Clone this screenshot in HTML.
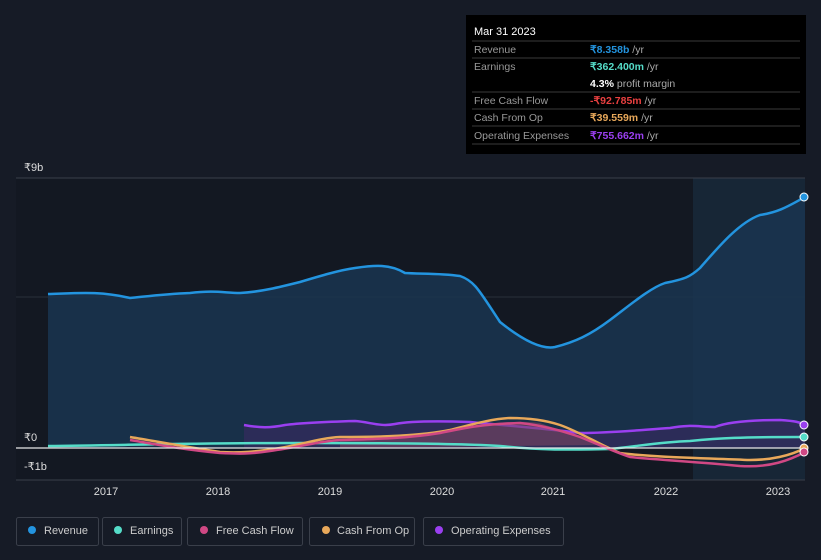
<!DOCTYPE html>
<html><head><style>
body{margin:0;background:#161b26;font-family:"Liberation Sans",sans-serif;}
svg{display:block}
</style></head><body>
<svg width="821" height="560" xmlns="http://www.w3.org/2000/svg" font-family="Liberation Sans, sans-serif">
<rect width="821" height="560" fill="#161b26"/>
<rect x="16" y="178" width="789" height="302" fill="#131822"/>
<rect x="693" y="178" width="112" height="302" fill="#172636"/>
<line x1="16" y1="178" x2="805" y2="178" stroke="#3a3f4a"/>
<line x1="16" y1="297" x2="805" y2="297" stroke="#2a2f3a"/>
<line x1="16" y1="480" x2="805" y2="480" stroke="#3a3f4a"/>
<text x="24" y="171" font-size="11" fill="#ddd">₹9b</text>
<text x="24" y="441" font-size="11" fill="#ddd">₹0</text>
<text x="24" y="470" font-size="11" fill="#ddd">-₹1b</text>
<path d="M48,294 C80,293 100,291 130,298 C150,296 165,294 190,293 C215,290 225,293 240,293 C260,292 280,287 300,282 C320,276 340,270 355,268 C375,265 390,264 405,273 C420,274 440,273 460,276 C475,281 480,292 500,322 C520,338 540,350 555,347 C575,342 590,335 610,320 C630,305 650,288 665,283 C685,279 690,277 700,268 C720,245 740,222 760,215 C780,212 790,205 805,197 L805,448 L48,448 Z" fill="#1a3550" opacity="0.85"/>
<path d="M48,294 C80,293 100,291 130,298 C150,296 165,294 190,293 C215,290 225,293 240,293 C260,292 280,287 300,282 C320,276 340,270 355,268 C375,265 390,264 405,273 C420,274 440,273 460,276 C475,281 480,292 500,322 C520,338 540,350 555,347 C575,342 590,335 610,320 C630,305 650,288 665,283 C685,279 690,277 700,268 C720,245 740,222 760,215 C780,212 790,205 805,197" fill="none" stroke="#2394df" stroke-width="2.5"/>
<path d="M244,425 C260,428 270,428 285,425 C300,423 320,422 355,421 C370,422 380,427 395,424 C410,421 440,421 470,422 C500,425 540,428 580,433 C610,433 640,430 670,428 C690,424 700,427 715,427 C730,421 760,420 780,420 C795,421 800,422 805,425 L805,448 L244,448 Z" fill="#3b2a63" opacity="0.6"/>
<path d="M244,425 C260,428 270,428 285,425 C300,423 320,422 355,421 C370,422 380,427 395,424 C410,421 440,421 470,422 C500,425 540,428 580,433 C610,433 640,430 670,428 C690,424 700,427 715,427 C730,421 760,420 780,420 C795,421 800,422 805,425" fill="none" stroke="#9a3ff0" stroke-width="2.5"/>
<path d="M340,440 C380,437 420,438 450,430 C480,423 520,420 540,423 C560,430 580,438 600,445 L340,448Z" fill="#7a4660" opacity="0.6"/>
<path d="M48,446 C130,445 200,443 300,443 C400,443 470,444 500,446 C540,450 560,450 610,449 C640,446 660,442 690,441 C720,438 740,437 805,437" fill="none" stroke="#55dcc8" stroke-width="2.5"/>
<path d="M130,437 C160,442 180,446 220,452 C240,453 255,452 280,448 C300,445 320,438 340,437 C380,437 420,436 450,430 C470,425 490,419 510,418 C530,418 545,420 560,425 C580,432 600,445 620,453 C650,457 700,458 750,460 C770,460 790,456 805,448" fill="none" stroke="#e8a85a" stroke-width="2.5"/>
<path d="M130,440 C160,445 180,449 220,453 C240,454 250,454 270,451 C300,447 320,441 340,440 C380,439 410,438 440,433 C460,429 480,424 520,423 C540,425 560,430 580,437 C600,445 615,452 630,457 C660,460 700,462 740,466 C770,468 790,460 805,452" fill="none" stroke="#d04884" stroke-width="2.5"/>
<line x1="16" y1="448" x2="805" y2="448" stroke="#e8e8e8" stroke-width="1.2"/>
<circle cx="804" cy="197" r="4" fill="#2394df" stroke="#fff" stroke-width="1"/>
<circle cx="804" cy="425" r="4" fill="#9a3ff0" stroke="#fff" stroke-width="1"/>
<circle cx="804" cy="437" r="4" fill="#55dcc8" stroke="#fff" stroke-width="1"/>
<circle cx="804" cy="448" r="4" fill="#e8a85a" stroke="#fff" stroke-width="1"/>
<circle cx="804" cy="452" r="4" fill="#d04884" stroke="#fff" stroke-width="1"/>
<g font-size="11" fill="#ddd" text-anchor="middle">
<text x="106" y="495">2017</text><text x="218" y="495">2018</text><text x="330" y="495">2019</text><text x="442" y="495">2020</text><text x="553" y="495">2021</text><text x="666" y="495">2022</text><text x="778" y="495">2023</text>
</g>
<g font-size="11" fill="#ccc">
<rect x="16.5" y="517.5" width="82" height="28" rx="2" fill="none" stroke="#3a3f4a"/><circle cx="32" cy="530" r="4" fill="#2394df"/><text x="44" y="534">Revenue</text>
<rect x="102.5" y="517.5" width="79" height="28" rx="2" fill="none" stroke="#3a3f4a"/><circle cx="118" cy="530" r="4" fill="#55dcc8"/><text x="130" y="534">Earnings</text>
<rect x="187.5" y="517.5" width="115" height="28" rx="2" fill="none" stroke="#3a3f4a"/><circle cx="204" cy="530" r="4" fill="#d04884"/><text x="216" y="534">Free Cash Flow</text>
<rect x="309.5" y="517.5" width="105" height="28" rx="2" fill="none" stroke="#3a3f4a"/><circle cx="326" cy="530" r="4" fill="#e8a85a"/><text x="337" y="534">Cash From Op</text>
<rect x="423.5" y="517.5" width="140" height="28" rx="2" fill="none" stroke="#3a3f4a"/><circle cx="439" cy="530" r="4" fill="#9a3ff0"/><text x="451" y="534">Operating Expenses</text>
</g>
<rect x="466" y="15" width="340" height="139" fill="#000"/>
<text x="474" y="35" font-size="11" fill="#fff">Mar 31 2023</text>
<g stroke="#3a3a3a"><line x1="472" y1="41" x2="800" y2="41"/><line x1="472" y1="58" x2="800" y2="58"/><line x1="472" y1="92" x2="800" y2="92"/><line x1="472" y1="109" x2="800" y2="109"/><line x1="472" y1="126" x2="800" y2="126"/><line x1="472" y1="144" x2="800" y2="144"/></g>
<g font-size="10.5" fill="#999">
<text x="474" y="53">Revenue</text><text x="474" y="70">Earnings</text><text x="474" y="104">Free Cash Flow</text><text x="474" y="121">Cash From Op</text><text x="474" y="139">Operating Expenses</text>
</g>
<g font-size="10.5" font-weight="bold">
<text x="590" y="53" fill="#2394df">₹8.358b <tspan fill="#aaa" font-weight="normal">/yr</tspan></text>
<text x="590" y="70" fill="#55dcc8">₹362.400m <tspan fill="#aaa" font-weight="normal">/yr</tspan></text>
<text x="590" y="87" fill="#fff">4.3% <tspan fill="#aaa" font-weight="normal">profit margin</tspan></text>
<text x="590" y="104" fill="#e84040">-₹92.785m <tspan fill="#aaa" font-weight="normal">/yr</tspan></text>
<text x="590" y="121" fill="#e8a85a">₹39.559m <tspan fill="#aaa" font-weight="normal">/yr</tspan></text>
<text x="590" y="139" fill="#9a3ff0">₹755.662m <tspan fill="#aaa" font-weight="normal">/yr</tspan></text>
</g>
</svg>
</body></html>
